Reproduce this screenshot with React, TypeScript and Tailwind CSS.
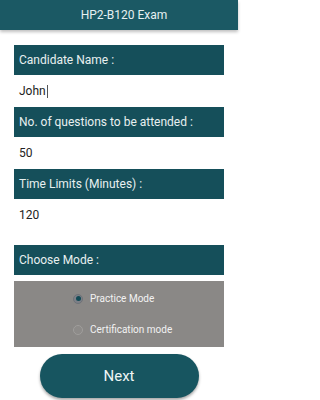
import { useState } from 'react';

const font = { fontFamily: 'Roboto, "Liberation Sans", sans-serif' };

function Label({ text, className = '' }: { text: string; className?: string }) {
  return (
    <div className={`flex h-[30px] items-center bg-[#154f5a] px-[5px] text-[12px] text-[#e8f0f0] ${className}`}>
      {text}
    </div>
  );
}

function Value({ text, caret = false }: { text: string; caret?: boolean }) {
  return (
    <div className="flex h-[32px] items-center px-[5px] text-[12px] text-[#222]">
      {text}
      {caret && <span className="ml-[1px] inline-block h-[13px] w-[1px] bg-[#555]" />}
    </div>
  );
}

function Radio({ checked, label, onClick }: { checked: boolean; label: string; onClick: () => void }) {
  return (
    <button type="button" onClick={onClick} className="flex items-center gap-[7px] text-[10px] text-[#f2f2f2]">
      <span
        className={`flex h-[10px] w-[10px] items-center justify-center rounded-full border ${
          checked ? 'border-[#6f7378] bg-[#7d8088]' : 'border-[#a09e9c] bg-[#8d8b89]'
        }`}
      >
        {checked && <span className="h-[5px] w-[5px] rounded-full bg-[#124a55]" />}
      </span>
      {label}
    </button>
  );
}

export default function App() {
  const [mode, setMode] = useState<'practice' | 'cert'>('practice');
  return (
    <div className="flex h-[400px] w-[238px] flex-col bg-white" style={font}>
      <div className="flex h-[30px] items-center justify-center bg-[#1b5964] pl-[10px] text-[12px] text-[#e6f0f1] shadow-[0_2px_3px_rgba(0,0,0,0.25)]">
        HP2-B120 Exam
      </div>
      <div className="mx-[14px] mt-[15px] flex flex-col">
        <Label text="Candidate Name :" />
        <Value text="John" caret />
        <Label text="No. of questions to be attended :" />
        <Value text="50" />
        <Label text="Time Limits (Minutes) :" />
        <Value text="120" />
        <Label text="Choose Mode :" className="mt-[14px] h-[29px]" />
        <div className="mt-[6px] flex h-[66px] flex-col justify-center gap-[16px] bg-[#8a8886] pl-[59px]">
          <Radio checked={mode === 'practice'} label="Practice Mode" onClick={() => setMode('practice')} />
          <Radio checked={mode === 'cert'} label="Certification mode" onClick={() => setMode('cert')} />
        </div>
      </div>
      <div className="mt-[7px] flex justify-center">
        <button
          type="button"
          className="h-[44px] w-[159px] rounded-full bg-[#175560] text-[15px] text-[#eef5f5] shadow-[0_2px_3px_rgba(0,0,0,0.35)]"
        >
          Next
        </button>
      </div>
    </div>
  );
}
